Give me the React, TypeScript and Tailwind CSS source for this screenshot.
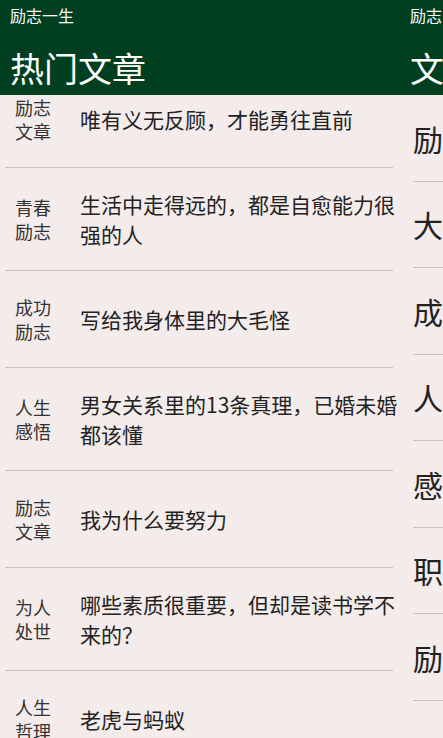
const articles = [
  { cat: ["励志", "文章"], title: "唯有义无反顾，才能勇往直前" },
  { cat: ["青春", "励志"], title: "生活中走得远的，都是自愈能力很强的人" },
  { cat: ["成功", "励志"], title: "写给我身体里的大毛怪" },
  { cat: ["人生", "感悟"], title: "男女关系里的13条真理，已婚未婚都该懂" },
  { cat: ["励志", "文章"], title: "我为什么要努力" },
  { cat: ["为人", "处世"], title: "哪些素质很重要，但却是读书学不来的？" },
  { cat: ["人生", "哲理"], title: "老虎与蚂蚁" },
];

const categories = ["励", "大", "成", "人", "感", "职", "励"];

const font = { fontFamily: '"Noto Sans CJK SC", "Noto Sans", sans-serif' };

function Header({ app, title }: { app: string; title: string }) {
  return (
    <div className="h-[95px] shrink-0 bg-[#003f20] pl-[10px] text-white">
      <div className="pt-[4px] text-[16px] leading-[22px] whitespace-nowrap">{app}</div>
      <div className="mt-[22px] text-[34px] leading-[40px] whitespace-nowrap">{title}</div>
    </div>
  );
}

export default function App() {
  return (
    <div
      className="flex h-[738px] w-[443px] overflow-hidden bg-[#f4eceb]"
      style={font}
    >
      <div className="flex w-[410px] shrink-0 flex-col">
        <Header app="励志一生" title="热门文章" />
        <div className="relative flex-1 overflow-hidden">
          <div className="-mt-[24px]">
            {articles.map((a, i) => (
              <div
                key={i}
                className="ml-[5px] flex min-h-[97px] w-[388px] items-center border-b border-[#c4c0bf] py-[21px] pl-[10px]"
              >
                <div className="w-[65px] shrink-0 text-[18px] leading-[24px] text-[#333]">
                  <div>{a.cat[0]}</div>
                  <div>{a.cat[1]}</div>
                </div>
                <div className="w-[325px] shrink-0 text-[21px] leading-[30px] text-[#222]">
                  {a.title}
                </div>
              </div>
            ))}
          </div>
        </div>
      </div>
      <div className="flex flex-1 flex-col overflow-hidden">
        <div className="h-[95px] shrink-0 bg-[#003f20] text-white">
          <div className="pt-[4px] text-[16px] leading-[22px] whitespace-nowrap">励志</div>
          <div className="mt-[22px] text-[34px] leading-[40px] whitespace-nowrap">文</div>
        </div>
        <div className="flex-1 overflow-hidden">
          {categories.map((c, i) => (
            <div
              key={i}
              className="ml-[3px] flex h-[86.5px] items-center border-b border-[#c4c0bf] text-[30px] leading-none text-[#222] whitespace-nowrap"
            >
              {c}
            </div>
          ))}
        </div>
      </div>
    </div>
  );
}
